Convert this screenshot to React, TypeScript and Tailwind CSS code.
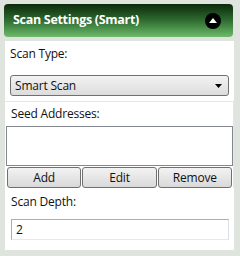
import React from 'react';

const font = { fontFamily: '"Open Sans", "Noto Sans", sans-serif' };

const Btn = ({ label }: { label: string }) => (
  <button className="flex-1 h-[21px] rounded-[3px] border border-[#707070] bg-gradient-to-b from-[#f3f3f3] to-[#d9d9d9] text-[12px] leading-none text-[#111] tracking-[-0.2px]">
    {label}
  </button>
);

export default function App() {
  return (
    <div className="w-[240px] h-[256px] bg-[#dfe4de] pt-[4px] overflow-hidden" style={font}>
      {/* header */}
      <div className="ml-[4px] w-[229px] h-[33px] rounded-[4px] bg-gradient-to-b from-[#0c2a0c] via-[#2f6d31] to-[#6dbb6c] flex items-center justify-between pl-[9px] pr-[12px]">
        <span className="text-white font-bold text-[12.5px] tracking-[-0.3px]">Scan Settings (Smart)</span>
        <span className="w-[16px] h-[16px] rounded-full bg-black flex items-center justify-center">
          <svg width="8" height="5" viewBox="0 0 8 5">
            <path d="M0 5 L4 0 L8 5 Z" fill="#fff" />
          </svg>
        </span>
      </div>

      {/* panel */}
      <div className="ml-[5px] mt-[4px] w-[229px] h-[209px] bg-white flex flex-col">
        <div className="px-[5px] pt-[5px]">
          <div className="text-[12px] leading-[16px] text-[#111] tracking-[-0.2px]">Scan Type:</div>
          <div className="mt-[13px] h-[21px] rounded-[3px] border border-[#707070] bg-gradient-to-b from-[#f3f3f3] to-[#dcdcdc] flex items-center justify-between pl-[4px] pr-[6px]">
            <span className="text-[12px] leading-none text-[#111] tracking-[-0.2px]">Smart Scan</span>
            <svg width="7" height="4" viewBox="0 0 7 4">
              <path d="M0 0 L7 0 L3.5 4 Z" fill="#000" />
            </svg>
          </div>
        </div>

        <div className="mt-[5px] border-t border-r border-[#e6e6e6] flex flex-col">
          <div className="px-[6px] pt-[4px] text-[12px] leading-[16px] text-[#111] tracking-[-0.2px]">Seed Addresses:</div>
          <div className="ml-[1px] mt-[4px] h-[40px] border border-[#828790] bg-white" />
          <div className="flex gap-[1px] ml-[2px] mr-[1px] mt-[1px]">
            <Btn label="Add" />
            <Btn label="Edit" />
            <Btn label="Remove" />
          </div>
        </div>

        <div className="px-[6px] pt-[6px]">
          <div className="text-[12px] leading-[16px] text-[#111] tracking-[-0.2px]">Scan Depth:</div>
          <div className="mt-[9px] mr-[-1px] h-[21px] border border-[#abadb3] border-b-[#e3e9ef] border-r-[#dbdfe6] flex items-center pl-[4px] text-[12px] text-[#111]">
            2
          </div>
        </div>
      </div>
    </div>
  );
}
